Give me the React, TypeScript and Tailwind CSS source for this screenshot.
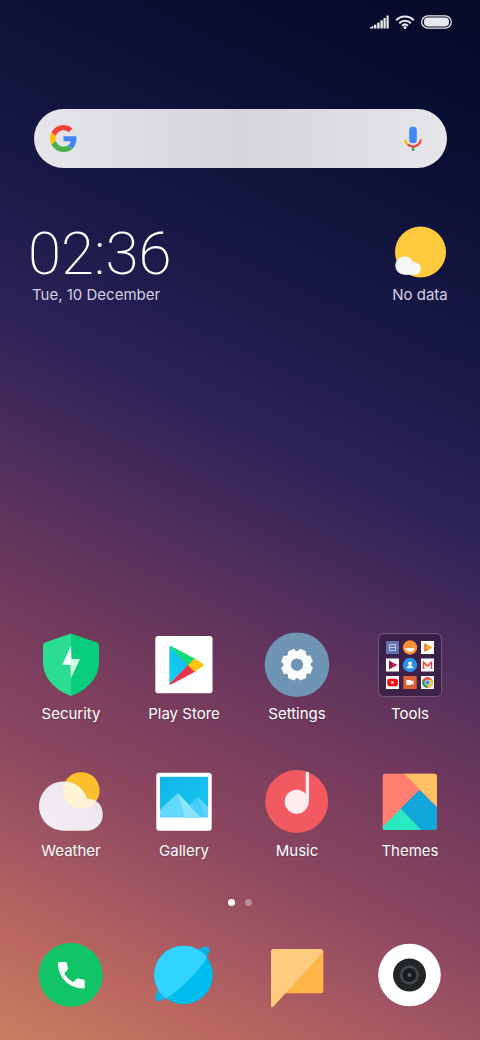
import type { ReactNode } from 'react';

interface AppEntry {
  name: string;
  icon: ReactNode;
}

function StatusBar() {
  return (
    <div className="flex h-11 items-center justify-end gap-1.5 pr-7 text-[#e8e9f0]">
      <svg width="19" height="14" viewBox="0 0 19 14" fill="currentColor" role="img" aria-label="Signal">
        <path d="M0 13.500V12.500L3.300 10.800V13.500Z" />
        <rect x="4" y="9.700" width="2.400" height="3.800" />
        <rect x="7.200" y="7.600" width="2.400" height="5.900" />
        <rect x="10.400" y="5.300" width="2.400" height="8.200" />
        <rect x="13.500" y="3" width="2.200" height="10.500" />
        <rect x="16.500" y="0.500" width="2.200" height="13" />
      </svg>
      <svg width="20" height="14" viewBox="0 0 20 14" fill="none" stroke="currentColor" strokeWidth="2" role="img" aria-label="Wi-Fi">
        <path d="M1.200 5.200A12.500 12.500 0 0 1 18.800 5.200" />
        <path d="M4.200 8.200A8.300 8.300 0 0 1 15.800 8.200" />
        <path d="M7 10.700A4.500 4.500 0 0 1 13 10.700" />
        <circle cx="10" cy="12.400" r="1.500" fill="currentColor" stroke="none" />
      </svg>
      <svg width="31" height="14" viewBox="0 0 31 14" role="img" aria-label="Battery full">
        <rect x="0.700" y="0.900" width="29.600" height="12.200" rx="6.100" fill="none" stroke="currentColor" strokeWidth="1.300" />
        <rect x="3" y="2.600" width="25" height="8.800" rx="3.800" fill="currentColor" />
      </svg>
    </div>
  );
}

function GoogleLogo() {
  return (
    <svg width="27" height="27" viewBox="0 0 48 48" aria-hidden="true">
      <path fill="#f44336" d="M24 9.500c3.540 0 6.710 1.220 9.210 3.600l6.850-6.850C35.900 2.380 30.470 0 24 0 14.620 0 6.510 5.380 2.560 13.220l7.980 6.190C12.430 13.720 17.740 9.500 24 9.500z" />
      <path fill="#4285f4" d="M46.980 24.550c0-1.570-.15-3.090-.38-4.550H24v9.020h12.940c-.58 2.960-2.260 5.480-4.780 7.180l7.730 6c4.510-4.180 7.090-10.360 7.090-17.650z" />
      <path fill="#ffc107" d="M10.530 28.590c-.48-1.450-.76-2.990-.76-4.590s.27-3.140.76-4.590l-7.980-6.190C.92 16.460 0 20.120 0 24c0 3.880.92 7.540 2.560 10.780l7.970-6.190z" />
      <path fill="#4caf50" d="M24 48c6.480 0 11.930-2.130 15.890-5.810l-7.730-6c-2.150 1.450-4.920 2.300-8.160 2.300-6.260 0-11.570-4.220-13.470-9.910l-7.980 6.190C6.510 42.620 14.620 48 24 48z" />
    </svg>
  );
}

function SearchBar() {
  return (
    <form
      role="search"
      onSubmit={e => e.preventDefault()}
      className="mr-[33px] ml-[34px] mt-[65px] flex h-[59px] items-center rounded-full bg-linear-to-r from-[#e5e5ea] via-[#d5d6db] to-[#e5e5ea] px-4"
    >
      <GoogleLogo />
      <input type="search" aria-label="Search" className="mx-2 min-w-0 flex-1 bg-transparent text-gray-800 outline-none" />
      <button type="button" aria-label="Voice search" className="flex w-9 justify-center">
        <svg width="18" height="26" viewBox="0 0 18 26" fill="none">
          <rect x="5.200" y="0.800" width="7.600" height="16.400" rx="3.500" fill="#4285f4" />
          <path d="M9 20v5" stroke="#34a853" strokeWidth="2.200" />
          <path d="M1.300 13.500A7.700 7.300 0 0 0 4 18.700" stroke="#fbbc05" strokeWidth="2.200" />
          <path d="M3.800 18.500A7.700 7.300 0 0 0 16.700 13.500" stroke="#ea4335" strokeWidth="2.200" />
        </svg>
      </button>
    </form>
  );
}

function ClockWidget() {
  return (
    <section className="mt-14 mr-8 ml-7 flex items-start justify-between">
      <div>
        <time className="block font-['Roboto'] text-[60px] leading-[60px] font-extralight text-white">02:36</time>
        <p className="mt-px ml-1 text-[15px] leading-5 text-[#d3d1e0]">Tue, 10 December</p>
      </div>
      <div className="flex flex-col items-center">
        <svg width="56" height="56" viewBox="0 0 56 56" className="mt-0.5" aria-hidden="true">
          <circle cx="28.500" cy="26" r="25.500" fill="#ffca3e" />
          <circle cx="12.500" cy="39.500" r="9.300" fill="#eceef2" />
          <circle cx="22.500" cy="42.500" r="6.300" fill="#f8f9f8" />
          <path d="M12.500 48.800h10v-8h-10z" fill="#f4f5f6" />
          <circle cx="13.500" cy="39" r="8" fill="#f6f7f8" />
        </svg>
        <p className="mt-[3px] text-[15px] leading-5 text-[#d3d1e0]">No data</p>
      </div>
    </section>
  );
}

function Icon({ children }: { children: ReactNode }) {
  return (
    <svg width="72" height="72" viewBox="0 0 72 72" aria-hidden="true">
      {children}
    </svg>
  );
}

const securityIcon = (
  <Icon>
    <path d="M36 5.500 L10 14.500Q8 15.300 8 17.500V34C8 50 20 62 36 68Z" fill="#2bdc93" />
    <path d="M36 5.500 L62 14.500Q64 15.300 64 17.500V34C64 50 52 62 36 68Z" fill="#07cd7d" />
    <path d="M36 31H45L36 50 35.300 37Z" fill="#d3f8e7" />
    <path d="M36 18 27.300 36.800H36Z" fill="#fff" />
    <path d="M36 18V36.800H35.300L36.500 31Z" fill="#fff" />
  </Icon>
);

const playStoreIcon = (
  <Icon>
    <defs>
      <linearGradient id="play-blue" x1="1" y1="0" x2="0" y2="1">
        <stop offset="0" stopColor="#12b5ea" />
        <stop offset="1" stopColor="#13d3f5" />
      </linearGradient>
    </defs>
    <rect x="7.300" y="8" width="57.200" height="57.200" rx="3" fill="#fff" />
    <path d="M21.300 18.500V56L40.500 37Z" fill="url(#play-blue)" />
    <path d="M21.300 18.500Q22 17.500 23.500 18.300L47.500 31 40.500 37.500Z" fill="#12dc72" />
    <path d="M21.300 56Q22 57 23.500 56.200L47.500 43.500 40.500 36.500Z" fill="#ea344b" />
    <path d="M46.500 30.500 54.500 35.500Q56.500 37 54.500 38.500L46.500 43.800 40 37.200Z" fill="#fdc40b" />
  </Icon>
);

const gearTeeth = [0, 45, 90, 135, 180, 225, 270, 315];

const settingsIcon = (
  <Icon>
    <circle cx="36" cy="36.700" r="32.300" fill="#7094b3" />
    <g fill="#fbfcfd">
      {gearTeeth.map(angle => (
        <path key={angle} d="M31.300 25 32.700 20.900H39.300L40.700 25Z" transform={`rotate(${angle + 22} 36 36.700)`} />
      ))}
    </g>
    <circle cx="36" cy="36.700" r="9.900" fill="none" stroke="#fbfcfd" strokeWidth="7.400" />
  </Icon>
);

const toolsIcon = (
  <Icon>
    <rect x="4.500" y="5.500" width="63" height="63" rx="5.500" fill="#2d173b" fillOpacity="0.600" stroke="#8b7190" strokeOpacity="0.650" />
    <rect x="12" y="13" width="13" height="13" fill="#6172b0" />
    <path d="M15.500 16.500h6v6h-6zM15.500 19.500h6" fill="none" stroke="#c3cae6" />
    <circle cx="36" cy="19.500" r="7.200" fill="#f79135" />
    <path d="M31.500 20h9a4.500 3.700 0 0 1-9 0z" fill="#fff" />
    <rect x="47" y="13" width="13" height="13" fill="#fff" />
    <path d="M50.500 15 59 19.500 50.500 24Z" fill="#f6ae21" />
    <path d="M50.500 15V24L54 20Z" fill="#ef6133" />
    <circle cx="53.500" cy="19.500" r="1.800" fill="#ffd65c" stroke="#e97b2d" strokeWidth="0.600" />
    <rect x="12" y="30.500" width="13" height="13" fill="#fff" />
    <path d="M15 32.500 23.500 37 15 41.500Z" fill="#c51c50" />
    <path d="M15 32.500V41.500L18 39V35Z" fill="#8f1740" />
    <circle cx="36" cy="37" r="7.200" fill="#2b92ec" />
    <circle cx="36" cy="35.300" r="1.900" fill="#fff" />
    <path d="M32.700 40.300Q32.700 37.800 35.200 37.700V36H36.800V37.700Q39.300 37.800 39.300 40.300Z" fill="#fff" />
    <rect x="47" y="30.500" width="13" height="13" fill="#fff" />
    <path d="M49.500 34H57.500V41H49.500Z" fill="#f0edee" />
    <path d="M49.500 41V34.300L53.500 38 57.500 34.300V41" fill="none" stroke="#df4b40" strokeWidth="1.500" />
    <rect x="12" y="48" width="13" height="13" fill="#fff" />
    <rect x="13.300" y="50.800" width="10.600" height="7.400" rx="2" fill="#f80a0a" />
    <path d="M17.300 52.700 20.500 54.500 17.300 56.300Z" fill="#fff" />
    <rect x="29.300" y="48" width="13.400" height="13" fill="#dc6333" />
    <path d="M32.300 52h5v1.500l2.200-1.300v4.600l-2.200-1.300V57h-5z" fill="#fff" />
    <rect x="47" y="48" width="13" height="13" fill="#fff" />
    <circle cx="53.500" cy="54.500" r="5.400" fill="#e3473a" />
    <path d="M53.500 54.500 48.800 51.800A5.400 5.400 0 0 0 53.500 59.900Z" fill="#2ba25a" />
    <path d="M53.500 54.500 53.500 59.900A5.400 5.400 0 0 0 58.200 51.800H53.500Z" fill="#f5c432" />
    <circle cx="53.500" cy="54.500" r="2.500" fill="#4688e8" stroke="#fff" strokeWidth="0.700" />
  </Icon>
);

const cloudPath = 'M29.300 65.700A24.600 24.600 0 1 1 52 33.700Q67.700 34.500 67.700 49.700A16 16 0 0 1 51.700 65.700Z';

const weatherIcon = (
  <Icon>
    <defs>
      <linearGradient id="cloud-fill" x1="1" y1="0" x2="0" y2="1">
        <stop offset="0" stopColor="#e9e3ee" />
        <stop offset="0.500" stopColor="#efe9f0" />
        <stop offset="1" stopColor="#f5f0f3" />
      </linearGradient>
      <clipPath id="cloud-clip">
        <path d={cloudPath} />
      </clipPath>
    </defs>
    <circle cx="46.300" cy="25.500" r="18.300" fill="#fcbf2d" />
    <path d={cloudPath} fill="url(#cloud-fill)" />
    <circle cx="46.300" cy="25.500" r="18.300" fill="#fff3d6" clipPath="url(#cloud-clip)" />
  </Icon>
);

const galleryIcon = (
  <Icon>
    <defs>
      <linearGradient id="gallery-sky" x1="0" y1="0" x2="1" y2="1">
        <stop offset="0" stopColor="#12b4e6" />
        <stop offset="1" stopColor="#18c8f2" />
      </linearGradient>
    </defs>
    <rect x="8.300" y="7.800" width="55.400" height="58" rx="3" fill="#fff" />
    <rect x="12" y="11.800" width="48" height="40.400" fill="url(#gallery-sky)" />
    <path d="M36 45 49.700 32.300 60 42V52.200H36Z" fill="#48cdfa" />
    <path d="M49.700 32.300 60 42V52.200H57Z" fill="#61d5fb" />
    <path d="M12 44.500 29.700 28 52.300 52.200H12Z" fill="#62d8fd" />
    <path d="M29.700 28 52.300 52.200H37.300Z" fill="#8ee4fd" />
  </Icon>
);

const musicIcon = (
  <Icon>
    <circle cx="35.700" cy="36.500" r="31.500" fill="#f15a60" />
    <circle cx="35.700" cy="36.700" r="12" fill="#ffecee" />
    <path d="M44.700 6.500 48 7.500V37H44.700Z" fill="#ffecee" />
  </Icon>
);

const themesIcon = (
  <Icon>
    <defs>
      <clipPath id="themes-clip">
        <rect x="8.700" y="8.800" width="54.200" height="56.200" rx="2.500" />
      </clipPath>
    </defs>
    <g clipPath="url(#themes-clip)">
      <rect width="72" height="72" fill="#ff7e6f" />
      <path d="M29.500 8 72 51V8Z" fill="#ffc161" />
      <path d="M45.400 25 26.500 43.800 48.200 66H72V51Z" fill="#10a6da" />
      <path d="M26.800 43.800 4 66.600H48.800Z" fill="#2aeac3" />
    </g>
  </Icon>
);

const phoneIcon = (
  <Icon>
    <circle cx="35.700" cy="36" r="32" fill="#12c468" />
    <path
      d="M24 23H30.700Q31.500 23 31.700 23.800L32.900 29.600Q33 30.400 32.400 31L29.300 34.200Q32.500 40 38.300 43.200L41.400 40Q42 39.400 42.800 39.600L48.900 40.700Q49.700 40.900 49.700 41.700V48.400Q49.700 49.400 48.700 49.400C34 49.400 23 38.500 23 24Q23 23 24 23Z"
      fill="#fff"
    />
  </Icon>
);

const browserIcon = (
  <Icon>
    <defs>
      <clipPath id="planet-clip">
        <circle cx="35.500" cy="36" r="29.300" />
      </clipPath>
    </defs>
    <ellipse cx="34.300" cy="34.700" rx="37.500" ry="9" transform="rotate(-45 34.300 34.700)" fill="#0bb2e6" />
    <circle cx="35.500" cy="36" r="29.300" fill="#00bcee" />
    <g clipPath="url(#planet-clip)" fill="#33d3ff">
      <path d="M0 0H69L0 69Z" />
      <ellipse cx="34.300" cy="34.700" rx="37.500" ry="9" transform="rotate(-45 34.300 34.700)" />
    </g>
  </Icon>
);

const messagesIcon = (
  <Icon>
    <path d="M62.300 12V52Q62.300 54.200 60 54.200H20Z" fill="#ffb648" />
    <path d="M12.500 10H60Q62 10 62.300 12.700L24.500 54.200 12.500 67.500Q10 69.500 10 66.500V12.500Q10 10 12.500 10Z" fill="#ffcb7e" />
  </Icon>
);

const cameraIcon = (
  <Icon>
    <circle cx="35.500" cy="36" r="31.300" fill="#fff" />
    <circle cx="35.500" cy="36" r="16.500" fill="#212526" />
    <circle cx="35.500" cy="36" r="8.300" fill="#191c1d" stroke="#43464a" strokeWidth="2.800" />
    <circle cx="35.500" cy="36" r="1.900" fill="#5a5d60" />
  </Icon>
);

const apps: AppEntry[] = [
  { name: 'Security', icon: securityIcon },
  { name: 'Play Store', icon: playStoreIcon },
  { name: 'Settings', icon: settingsIcon },
  { name: 'Tools', icon: toolsIcon },
  { name: 'Weather', icon: weatherIcon },
  { name: 'Gallery', icon: galleryIcon },
  { name: 'Music', icon: musicIcon },
  { name: 'Themes', icon: themesIcon },
];

const dock: AppEntry[] = [
  { name: 'Phone', icon: phoneIcon },
  { name: 'Browser', icon: browserIcon },
  { name: 'Messages', icon: messagesIcon },
  { name: 'Camera', icon: cameraIcon },
];

export default function App() {
  return (
    <div className="flex min-h-screen flex-col bg-[linear-gradient(205deg,#030926_0%,#0d1137_17%,#1a1948_31%,#2e2359_43%,#512f5d_54%,#70395c_64%,#8a465f_75%,#a05562_83%,#b96760_91%,#ca7f60_100%)] font-['Inter',sans-serif]">
      <StatusBar />
      <SearchBar />
      <ClockWidget />

      {/* App grid */}
      <main className="mt-auto grid grid-cols-[repeat(4,72px)] justify-between gap-y-[41px] pt-10 pr-[34px] pl-[35px]">
        {apps.map(app => (
          <button key={app.name} type="button" className="flex w-18 flex-col items-center gap-1">
            {app.icon}
            <span className="text-[15px] leading-5 whitespace-nowrap text-white text-shadow-xs">{app.name}</span>
          </button>
        ))}
      </main>

      {/* Page dots */}
      <div className="mt-[38px] flex justify-center gap-2.5">
        <span className="size-[7px] rounded-full bg-white" />
        <span className="size-[7px] rounded-full bg-white/35" />
      </div>

      {/* Dock */}
      <nav className="mt-[33px] mb-[29px] flex justify-between pr-[34px] pl-[35px]">
        {dock.map(app => (
          <button key={app.name} type="button" aria-label={app.name}>
            {app.icon}
          </button>
        ))}
      </nav>
    </div>
  );
}
